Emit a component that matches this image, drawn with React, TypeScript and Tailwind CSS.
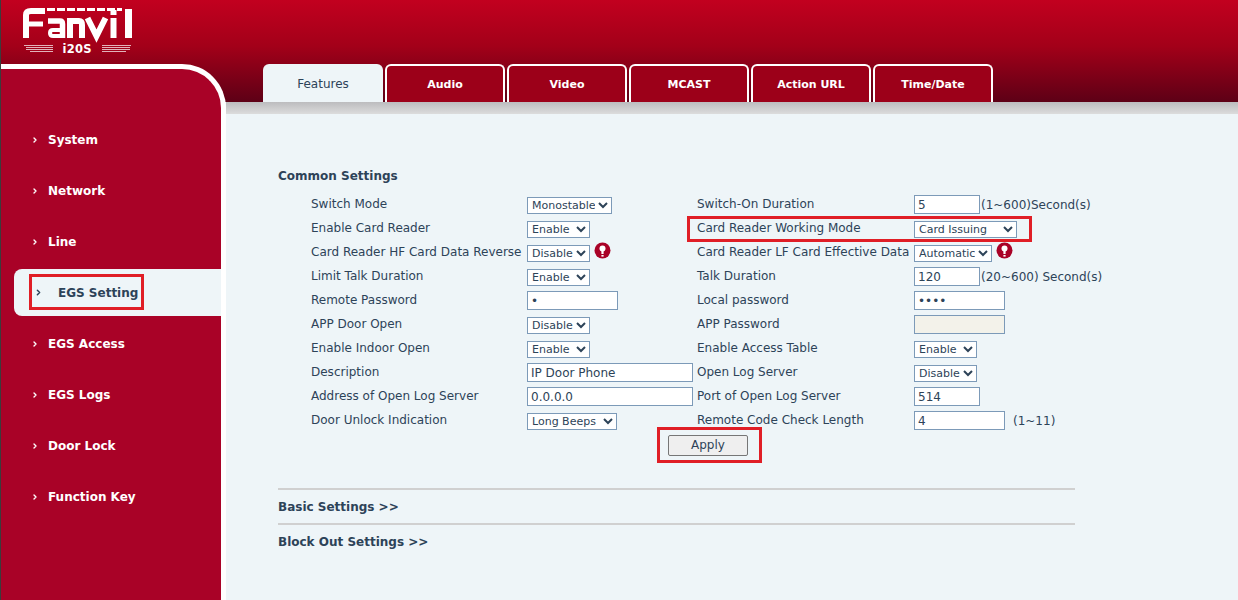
import { ChevronRight } from "lucide-react";
import type { ReactNode } from "react";

const tabs = ["Features", "Audio", "Video", "MCAST", "Action URL", "Time/Date"];
const menu = ["System", "Network", "Line", "EGS Setting", "EGS Access", "EGS Logs", "Door Lock", "Function Key"];

function Select({ value, width }: { value: string; width: string }) {
  return (
    <select
      defaultValue={value}
      className={`h-[17px] border border-[#7c9ab8] bg-white text-[11px] text-[#2d4358] outline-none ${width}`}
    >
      <option>{value}</option>
    </select>
  );
}

function TextBox({ value, width, type, disabled }: { value?: string; width: string; type?: string; disabled?: boolean }) {
  return (
    <input
      type={type ?? "text"}
      defaultValue={value}
      disabled={disabled}
      className={`-mt-[1px] h-[19px] border border-[#7c9ab8] pl-[3px] text-[12px] text-[#2d4358] outline-none ${width} ${
        disabled ? "bg-[#f3f2ea]" : "bg-white"
      }`}
    />
  );
}

function Warn() {
  return (
    <svg width="17" height="17" viewBox="0 0 17 17" className="ml-[4px] -mt-[5px] shrink-0">
      <circle cx="8.5" cy="8.5" r="8" fill="#a90227" />
      <circle cx="8.5" cy="6.500" r="3" fill="#fff" />
      <rect x="7.4" y="7" width="2.2" height="5" fill="#fff" />
      <rect x="7.4" y="13" width="2.2" height="1.6" fill="#fff" />
    </svg>
  );
}

function Row({ label, left, label2, right, marked }: { label: string; left: ReactNode; label2: string; right: ReactNode; marked?: boolean }) {
  return (
    <div className="relative grid h-[24px] grid-cols-[216px_170px_217px_1fr] items-center pl-[33px]">
      <span className="-mt-[1px] whitespace-nowrap">{label}</span>
      <div className="flex items-center pt-[2px]">{left}</div>
      <span className="-mt-[1px] whitespace-nowrap">{label2}</span>
      <div className="flex items-center whitespace-nowrap pt-[2px]">{right}</div>
      {marked && <span className="pointer-events-none absolute left-[409px] top-0 h-[26px] w-[345px] border-[3px] border-[#e01e26]" />}
    </div>
  );
}

function Logo() {
  return (
    <svg width="112" height="46" viewBox="0 0 112 46">
      <g fill="none" stroke="#fff">
        <path d="M4 30V7Q4 3 9 3H23" strokeWidth="6" />
        <path d="M4 16H21" strokeWidth="5" />
        <path d="M26 13H38Q40.500 13 40.500 16V30" strokeWidth="5.500" />
        <path d="M40 22H31Q28 22 28 25Q28 28 31 28H40" strokeWidth="4" />
        <path d="M48 30V13H57Q60 13 60 17V30" strokeWidth="6" />
        <path d="M65.500 10 74.500 28 83.500 10" strokeWidth="6" />
        <path d="M91.500 10V30M91.500 2V7" strokeWidth="6" />
        <path d="M106.500 1V30" strokeWidth="7" />
        <path d="M25 1.500H100" strokeWidth="3" strokeDasharray="8 2" />
      </g>
      <g stroke="#fff" strokeWidth="1" opacity="0.7">
        <path d="M2 37.500H31M4 39.500H31M4 41.500H31M8 43.500H31M80 37.500H109M80 39.500H108M80 41.500H108M80 43.500H104" />
      </g>
      <text x="55" y="44.500" textAnchor="middle" fill="#fff" fontFamily="DejaVu Sans" fontWeight="700" fontSize="11.500" textLength="29">
        i20S
      </text>
    </svg>
  );
}

export default function App() {
  return (
    <div className="h-[600px] w-[1238px] overflow-hidden border-l border-[#3c3c3c] bg-[#eef5f8] bg-[linear-gradient(#c2001f,#a30019_45%,#5d0016)] bg-[length:100%_102px] bg-no-repeat font-['DejaVu_Sans',sans-serif] text-[12px] text-[#2d4358]">
      <header className="h-[64px] pl-[21px] pt-[8px]">
        <Logo />
      </header>

      <div className="flex h-[536px]">
        <aside className="h-full w-[225px] shrink-0 rounded-tr-[44px] border-r-[5px] border-t-[5px] border-white bg-[#a90227] pt-[47px]">
          <nav className="flex flex-col gap-[4px]">
            {menu.map((item) =>
              item === "EGS Setting" ? (
                <div
                  key={item}
                  className="relative ml-[13px] flex h-[47px] items-center rounded-l-[8px] bg-[#eef5f8] pl-[20px] font-bold text-[#2d4358]"
                >
                  <ChevronRight size={9} strokeWidth={4} className="mr-[15px]" />
                  {item}
                  <span className="absolute left-[15px] top-[5px] h-[36px] w-[115px] border-[3px] border-[#e01e26]" />
                </div>
              ) : (
                <div key={item} className="flex h-[47px] items-center pl-[30px] font-bold text-white">
                  <ChevronRight size={8} strokeWidth={4} className="mr-[9px]" />
                  {item}
                </div>
              )
            )}
          </nav>
        </aside>

        <main className="min-w-0 flex-1">
          <div className="flex h-[38px] gap-[2px] pl-[37px]">
            {tabs.map((t, i) => (
              <div
                key={t}
                className={`flex h-[38px] w-[120px] items-center justify-center rounded-t-[6px] pt-[2px] ${
                  i === 0
                    ? "bg-[#eef5f8] text-[#2d4358]"
                    : "border-x-2 border-t-2 border-white bg-[#9c0019] text-[11px] font-bold text-white"
                }`}
              >
                {t}
              </div>
            ))}
          </div>
          <div className="h-[12px] bg-[linear-gradient(#bcbcbe,#dcdcdc)]" />

          <section className="pl-[52px] pt-[54px]">
            <h2 className="font-bold leading-[16px]">Common Settings</h2>
            <div className="mt-[8px]">
              <Row label="Switch Mode" left={<Select value="Monostable" width="w-[85px]" />} label2="Switch-On Duration"
                right={<><TextBox value="5" width="w-[66px]" /><span className="ml-[1px]">(1~600)Second(s)</span></>} />
              <Row marked label="Enable Card Reader" left={<Select value="Enable" width="w-[63px]" />} label2="Card Reader Working Mode"
                right={<Select value="Card Issuing" width="w-[103px]" />} />
              <Row label="Card Reader HF Card Data Reverse" left={<><Select value="Disable" width="w-[63px]" /><Warn /></>} label2="Card Reader LF Card Effective Data"
                right={<><Select value="Automatic" width="w-[78px]" /><Warn /></>} />
              <Row label="Limit Talk Duration" left={<Select value="Enable" width="w-[63px]" />} label2="Talk Duration"
                right={<><TextBox value="120" width="w-[66px]" /><span className="ml-[1px]">(20~600) Second(s)</span></>} />
              <Row label="Remote Password" left={<TextBox type="password" value="*" width="w-[91px]" />} label2="Local password"
                right={<TextBox type="password" value="****" width="w-[91px]" />} />
              <Row label="APP Door Open" left={<Select value="Disable" width="w-[63px]" />} label2="APP Password"
                right={<TextBox width="w-[91px]" disabled />} />
              <Row label="Enable Indoor Open" left={<Select value="Enable" width="w-[63px]" />} label2="Enable Access Table"
                right={<Select value="Enable" width="w-[63px]" />} />
              <Row label="Description" left={<TextBox value="IP Door Phone" width="w-[166px]" />} label2="Open Log Server"
                right={<Select value="Disable" width="w-[63px]" />} />
              <Row label="Address of Open Log Server" left={<TextBox value="0.0.0.0" width="w-[166px]" />} label2="Port of Open Log Server"
                right={<TextBox value="514" width="w-[66px]" />} />
              <Row label="Door Unlock Indication" left={<Select value="Long Beeps" width="w-[90px]" />} label2="Remote Code Check Length"
                right={<><TextBox value="4" width="w-[91px]" /><span className="ml-[8px]">(1~11)</span></>} />
            </div>

            <div className="ml-[379px] mt-[-5px] flex h-[36px] w-[105px] items-center border-[3px] border-[#e01e26] pl-[8px]">
              <button className="h-[21px] w-[80px] rounded-[2px] border border-[#767676] bg-[#efefef]">Apply</button>
            </div>

            <div className="mt-[25px] w-[797px]">
              <div className="h-[2px] bg-[#d0d0d0]" />
              <div className="flex h-[33px] items-center font-bold">Basic Settings &gt;&gt;</div>
              <div className="h-[2px] bg-[#d0d0d0]" />
              <div className="flex h-[33px] items-center font-bold">Block Out Settings &gt;&gt;</div>
            </div>
          </section>
        </main>
      </div>
    </div>
  );
}
